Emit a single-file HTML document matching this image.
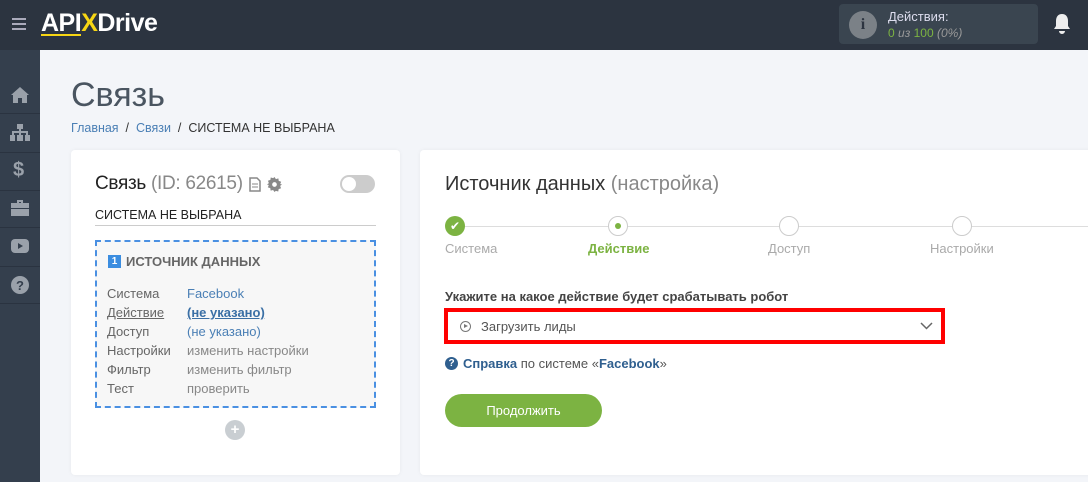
<!DOCTYPE html>
<html><head><meta charset="utf-8"><style>
*{box-sizing:border-box;margin:0;padding:0}
body{width:1088px;height:482px;overflow:hidden;background:#f3f5f9;font-family:"Liberation Sans",sans-serif;position:relative}
.top{position:absolute;left:0;top:0;width:1088px;height:50px;background:#2c3440}
.side{position:absolute;left:0;top:50px;width:40px;height:432px;background:#343f4d}
.side .d{position:absolute;left:0;width:40px;height:1px;background:#2a3340}
.side svg{position:absolute;left:10px}
.card{position:absolute;background:#fff;border-radius:4px;box-shadow:0 0 4px rgba(0,0,0,.05)}
.abs{position:absolute;white-space:nowrap}
</style></head><body>
<div class="top">
 <div class="abs" style="left:12px;top:18px;width:14px;height:2px;background:#aab;box-shadow:0 5px 0 #aab,0 10px 0 #aab"></div>
 <div class="abs" style="left:41px;top:9px;font-size:25px;font-weight:bold;color:#fff;letter-spacing:-0.5px">API<span style="color:#f7d614">X</span>Drive</div>
 <div class="abs" style="left:41px;top:34px;width:40px;height:2px;background:#f7d614"></div>
 <div class="abs" style="left:839px;top:4px;width:199px;height:40px;background:#3a4550;border-radius:4px"></div>
 <div class="abs" style="left:849px;top:11px;width:28px;height:28px;border-radius:50%;background:#7b8187;color:#2c3440;font-weight:bold;font-size:16px;text-align:center;line-height:28px;font-family:'Liberation Serif',serif">i</div>
 <div class="abs" style="left:888px;top:9px;font-size:13px;color:#dde">Действия:</div>
 <div class="abs" style="left:888px;top:26px;font-size:12px;color:#7cb342">0 <i style="color:#999">из</i> 100 <i style="color:#999">(0%)</i></div>
 <svg class="abs" style="left:1053px;top:13px" width="18" height="22" viewBox="0 0 18 22"><path d="M9 1c-4 0-6 3-6 7v5l-2 3h16l-2-3V8c0-4-2-7-6-7z M6 18a3 3 0 0 0 6 0z" fill="#eee"/></svg>
</div>
<div class="side">
 <div class="d" style="top:63px"></div><div class="d" style="top:102px"></div><div class="d" style="top:140px"></div><div class="d" style="top:177px"></div><div class="d" style="top:216px"></div><div class="d" style="top:253px"></div>
 <svg style="top:36px" width="20" height="18" viewBox="0 0 20 18"><path d="M10 1L1 9h2v8h5v-5h4v5h5V9h2z" fill="#9aa1aa"/></svg>
 <svg style="top:74px" width="20" height="18" viewBox="0 0 20 18"><path d="M7 0h6v5h-2v2h7v4h2v6h-5v-6h1V9H11v2h2v6H7v-6h2V9H4v2h1v6H0v-6h2V7h7V5H7z" fill="#9aa1aa"/></svg>
 <div class="abs" style="left:13px;top:109px;font-size:20px;font-weight:bold;color:#9aa1aa">$</div>
 <svg style="top:150px" width="20" height="16" viewBox="0 0 20 16"><path d="M7 0h6v3h6v13H1V3h6zM9 2v1h2V2z" fill="#9aa1aa"/><rect x="1" y="8" width="18" height="1" fill="#343f4d"/></svg>
 <svg style="top:188px" width="20" height="16" viewBox="0 0 20 16"><rect x="1" y="1" width="18" height="14" rx="4" fill="#9aa1aa"/><path d="M8 5l5 3-5 3z" fill="#343f4d"/></svg>
 <svg style="top:225px" width="20" height="20" viewBox="0 0 20 20"><circle cx="10" cy="10" r="9" fill="#9aa1aa"/><text x="10" y="15" font-size="13" font-weight="bold" text-anchor="middle" fill="#343f4d" font-family="Liberation Sans">?</text></svg>
</div>
<div class="abs" style="left:71px;top:76px;font-size:34px;color:#4a5561">Связь</div>
<div class="abs" style="left:71px;top:121px;font-size:12.5px;color:#333"><span style="color:#4a7fb5">Главная</span> &nbsp;/&nbsp; <span style="color:#4a7fb5">Связи</span> &nbsp;/&nbsp; СИСТЕМА НЕ ВЫБРАНА</div>

<div class="card" style="left:71px;top:150px;width:329px;height:325px">
 <div class="abs" style="left:24px;top:23px;font-size:19px;color:#222;letter-spacing:-0.3px">Связь <span style="color:#888">(ID: 62615)</span></div>
 <svg class="abs" style="left:178px;top:27px" width="12" height="15" viewBox="0 0 12 15"><path d="M1 1h7l3 3v10H1z" fill="none" stroke="#888" stroke-width="1.5"/><path d="M3 7h6M3 10h6" stroke="#888"/></svg>
 <svg class="abs" style="left:196px;top:27px" width="15" height="15" viewBox="0 0 16 16"><path d="M8 0l1.5 2.2 2.6-.7.4 2.6 2.6.9-1 2.5L16 8l-2 1.5 1 2.5-2.6.9-.4 2.6-2.6-.7L8 16l-1.5-2.2-2.6.7-.4-2.6L.9 11l1-2.5L0 8l2-1.5-1-2.5 2.6-.9.4-2.6 2.6.7z" fill="#888"/><circle cx="8" cy="8" r="2.5" fill="#fff"/></svg>
 <div class="abs" style="left:269px;top:25px;width:35px;height:18px;border-radius:9px;background:#ccc"><div style="position:absolute;left:2px;top:2px;width:14px;height:14px;border-radius:50%;background:#fff"></div></div>
 <div class="abs" style="left:24px;top:58px;font-size:12.5px;color:#222">СИСТЕМА НЕ ВЫБРАНА</div>
 <div class="abs" style="left:24px;top:75px;width:281px;height:1px;background:#ccc"></div>
 <div class="abs" style="left:24px;top:90px;width:281px;height:168px;border:2px dashed #4a90e2;background:#f7f7f7"></div>
 <div class="abs" style="left:37px;top:105px;width:13px;height:13px;background:#3b8de0;color:#fff;font-size:10px;font-weight:bold;text-align:center;line-height:13px">1</div>
 <div class="abs" style="left:55px;top:104px;font-size:13px;font-weight:bold;color:#666">ИСТОЧНИК ДАННЫХ</div>
 <div class="abs" style="left:36px;top:134px;font-size:13px;color:#666;line-height:19px">Система<br><u>Действие</u><br>Доступ<br>Настройки<br>Фильтр<br>Тест</div>
 <div class="abs" style="left:116px;top:134px;font-size:13px;color:#888;line-height:19px"><span style="color:#4a7fb5">Facebook</span><br><b style="color:#3a6fa5;text-decoration:underline">(не указано)</b><br><span style="color:#4a7fb5">(не указано)</span><br>изменить настройки<br>изменить фильтр<br>проверить</div>
 <div class="abs" style="left:154px;top:270px;width:20px;height:20px;border-radius:50%;background:#c9ced2;color:#fff;text-align:center;line-height:20px;font-size:15px;font-weight:bold">+</div>
</div>

<div class="card" style="left:420px;top:150px;width:680px;height:325px">
 <div class="abs" style="left:25px;top:23px;font-size:20px;color:#333">Источник данных <span style="color:#888">(настройка)</span></div>
 <div class="abs" style="left:36px;top:76px;width:660px;height:1px;background:#ddd"></div>
 <div class="abs" style="left:25px;top:66px;width:20px;height:20px;border-radius:50%;background:#7cb342;color:#fff;font-size:12px;text-align:center;line-height:20px">✔</div>
 <div class="abs" style="left:188px;top:66px;width:20px;height:20px;border-radius:50%;background:#fff;border:1px solid #ccc"><div style="position:absolute;left:6px;top:6px;width:6px;height:6px;border-radius:50%;background:#7cb342"></div></div>
 <div class="abs" style="left:359px;top:66px;width:20px;height:20px;border-radius:50%;background:#fff;border:1px solid #ccc"></div>
 <div class="abs" style="left:532px;top:66px;width:20px;height:20px;border-radius:50%;background:#fff;border:1px solid #ccc"></div>
 <div class="abs" style="left:25px;top:91px;font-size:13px;color:#aaa">Система</div>
 <div class="abs" style="left:168px;top:91px;font-size:13px;color:#7cb342;font-weight:bold">Действие</div>
 <div class="abs" style="left:348px;top:91px;font-size:13px;color:#aaa">Доступ</div>
 <div class="abs" style="left:510px;top:91px;font-size:13px;color:#aaa">Настройки</div>
 <div class="abs" style="left:25px;top:139px;font-size:13px;color:#444;font-weight:bold">Укажите на какое действие будет срабатывать робот</div>
 <div class="abs" style="left:24px;top:158px;width:501px;height:36px;border:4px solid #f00;background:#fff"></div>
 <div class="abs" style="left:40px;top:171px;width:11px;height:11px;border-radius:50%;border:1.5px solid #777"></div>
 <div class="abs" style="left:44px;top:174px;width:0;height:0;border-left:4px solid #777;border-top:2.5px solid transparent;border-bottom:2.5px solid transparent"></div>
 <div class="abs" style="left:61px;top:169px;font-size:13px;color:#555">Загрузить лиды</div>
 <svg class="abs" style="left:500px;top:172px" width="13" height="8" viewBox="0 0 13 8"><path d="M1 1l5.5 5.5L12 1" fill="none" stroke="#666" stroke-width="1.5"/></svg>
 <div class="abs" style="left:25px;top:207px;width:13px;height:13px;border-radius:50%;background:#2f5f8f;color:#fff;font-size:10px;font-weight:bold;text-align:center;line-height:13px">?</div>
 <div class="abs" style="left:43px;top:206px;font-size:13px;color:#555"><b style="color:#2f5f8f">Справка</b> по системе «<b style="color:#2f5f8f">Facebook</b>»</div>
 <div class="abs" style="left:25px;top:244px;width:157px;height:33px;border-radius:17px;background:#7cb342;color:#fff;font-size:13px;text-align:center;line-height:33px">Продолжить</div>
</div>
</body></html>
